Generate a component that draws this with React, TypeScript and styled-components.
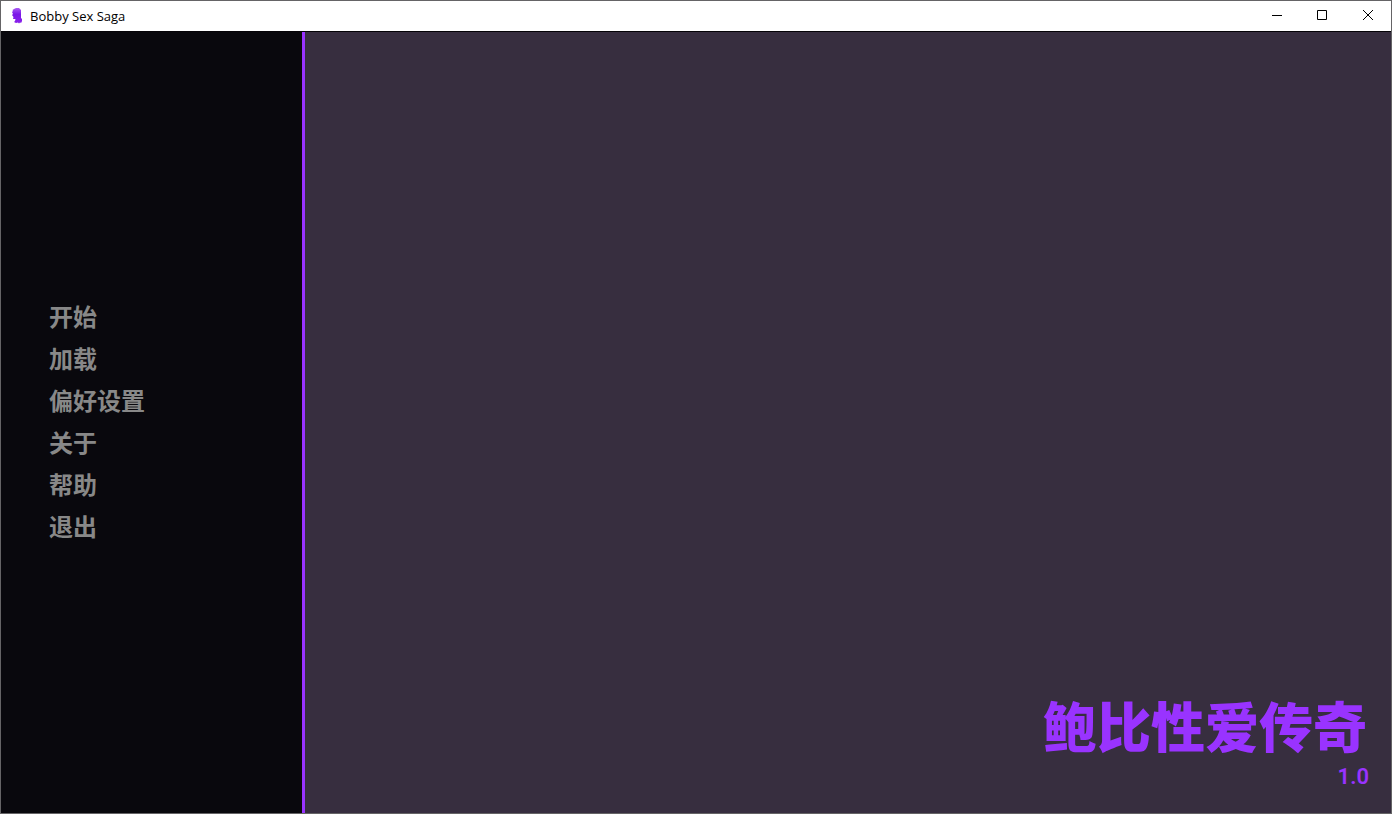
import React from "react";
import styled, { createGlobalStyle } from "styled-components";

const GlobalStyle = createGlobalStyle`
  *, *::before, *::after { box-sizing: border-box; }
  html, body, #root { height: 100%; margin: 0; }
  body { background: #372e3f; }
`;

const Window = styled.div`
  display: flex;
  flex-direction: column;
  min-height: 100%;
  border: 1px solid #656466;
  background: #372e3f;
  font-family: "Noto Sans CJK SC", sans-serif;
`;

const TitleBar = styled.header`
  display: flex;
  align-items: center;
  height: 31px;
  flex: none;
  padding-left: 8px;
  background: #ffffff;
  border-bottom: 1px solid #050307;
`;

const WindowTitle = styled.span`
  flex: 1;
  margin-left: 6px;
  color: #000000;
  font-family: "Open Sans", "Noto Sans", sans-serif;
  font-size: 13px;
  line-height: 16px;
`;

const WindowButton = styled.button`
  display: flex;
  align-items: center;
  justify-content: center;
  width: 46px;
  height: 30px;
  padding: 0 0 2px;
  border: 0;
  background: transparent;
  color: #000000;

  &:hover { background: #e5e5e5; }
`;

const Body = styled.div`
  display: flex;
  flex: 1;
`;

const Sidebar = styled.nav`
  display: flex;
  flex-direction: column;
  justify-content: center;
  flex: none;
  width: 304px;
  padding: 0 0 4px 48px;
  background: #09080d;
  border-right: 3px solid #9933ff;
`;

const MenuButton = styled.button`
  height: 42px;
  padding: 0;
  border: 0;
  background: transparent;
  color: #888888;
  font-family: inherit;
  font-size: 24px;
  font-weight: 700;
  line-height: 42px;
  text-align: left;
  cursor: pointer;

  &:hover { color: #9933ff; }
`;

const Stage = styled.main`
  display: flex;
  flex-direction: column;
  align-items: flex-end;
  justify-content: flex-end;
  flex: 1;
  padding: 0 22px 20px;
  color: #9933ff;
`;

const GameTitle = styled.h1`
  margin: 0 2px 0 0;
  font-size: 54px;
  font-weight: 900;
  line-height: 72px;
`;

const Version = styled.p`
  margin: 0;
  font-family: Roboto, sans-serif;
  font-size: 22px;
  font-weight: 600;
  line-height: 32px;
`;

const menuItems = ["开始", "加载", "偏好设置", "关于", "帮助", "退出"];

function AppIcon() {
  return (
    <svg width="15" height="18" viewBox="0 0 15 18" aria-hidden="true">
      <defs>
        <linearGradient id="bust" x1="0" y1="0" x2="0" y2="1">
          <stop offset="0" stopColor="#a95cf2" />
          <stop offset="0.4" stopColor="#7a16e8" />
          <stop offset="1" stopColor="#8a22ea" />
        </linearGradient>
      </defs>
      <path
        fill="url(#bust)"
        d="M5 2 L7 1 H10 L12 3 V11 L13 12 V15 L12 14.500 L12.500 16 L11 15.500 L10 16.500 L9 15.500 L7 16 L5 15 L6 14 L6.500 12 H4 L4.500 10 L3 8 L4 7 L3 5 L4 4 L3.500 3 Z"
      />
    </svg>
  );
}

function Glyph({ path }: { path: string }) {
  return (
    <svg width="10" height="10" viewBox="0 0 10 10" fill="none" stroke="currentColor" overflow="visible" aria-hidden="true">
      <path d={path} />
    </svg>
  );
}

export default function App() {
  return (
    <>
      <GlobalStyle />
      <Window>
        <TitleBar>
          <AppIcon />
          <WindowTitle>Bobby Sex Saga</WindowTitle>
          <WindowButton type="button" aria-label="Minimize">
            <Glyph path="M1 5.5H11" />
          </WindowButton>
          <WindowButton type="button" aria-label="Maximize">
            <Glyph path="M.5 .5H9.5V9.5H.5Z" />
          </WindowButton>
          <WindowButton type="button" aria-label="Close">
            <Glyph path="M0 0L10 10M10 0L0 10" />
          </WindowButton>
        </TitleBar>
        <Body>
          <Sidebar>
            {menuItems.map((item) => (
              <MenuButton type="button" key={item}>{item}</MenuButton>
            ))}
          </Sidebar>
          <Stage>
            <GameTitle>鲍比性爱传奇</GameTitle>
            <Version>1.0</Version>
          </Stage>
        </Body>
      </Window>
    </>
  );
}
